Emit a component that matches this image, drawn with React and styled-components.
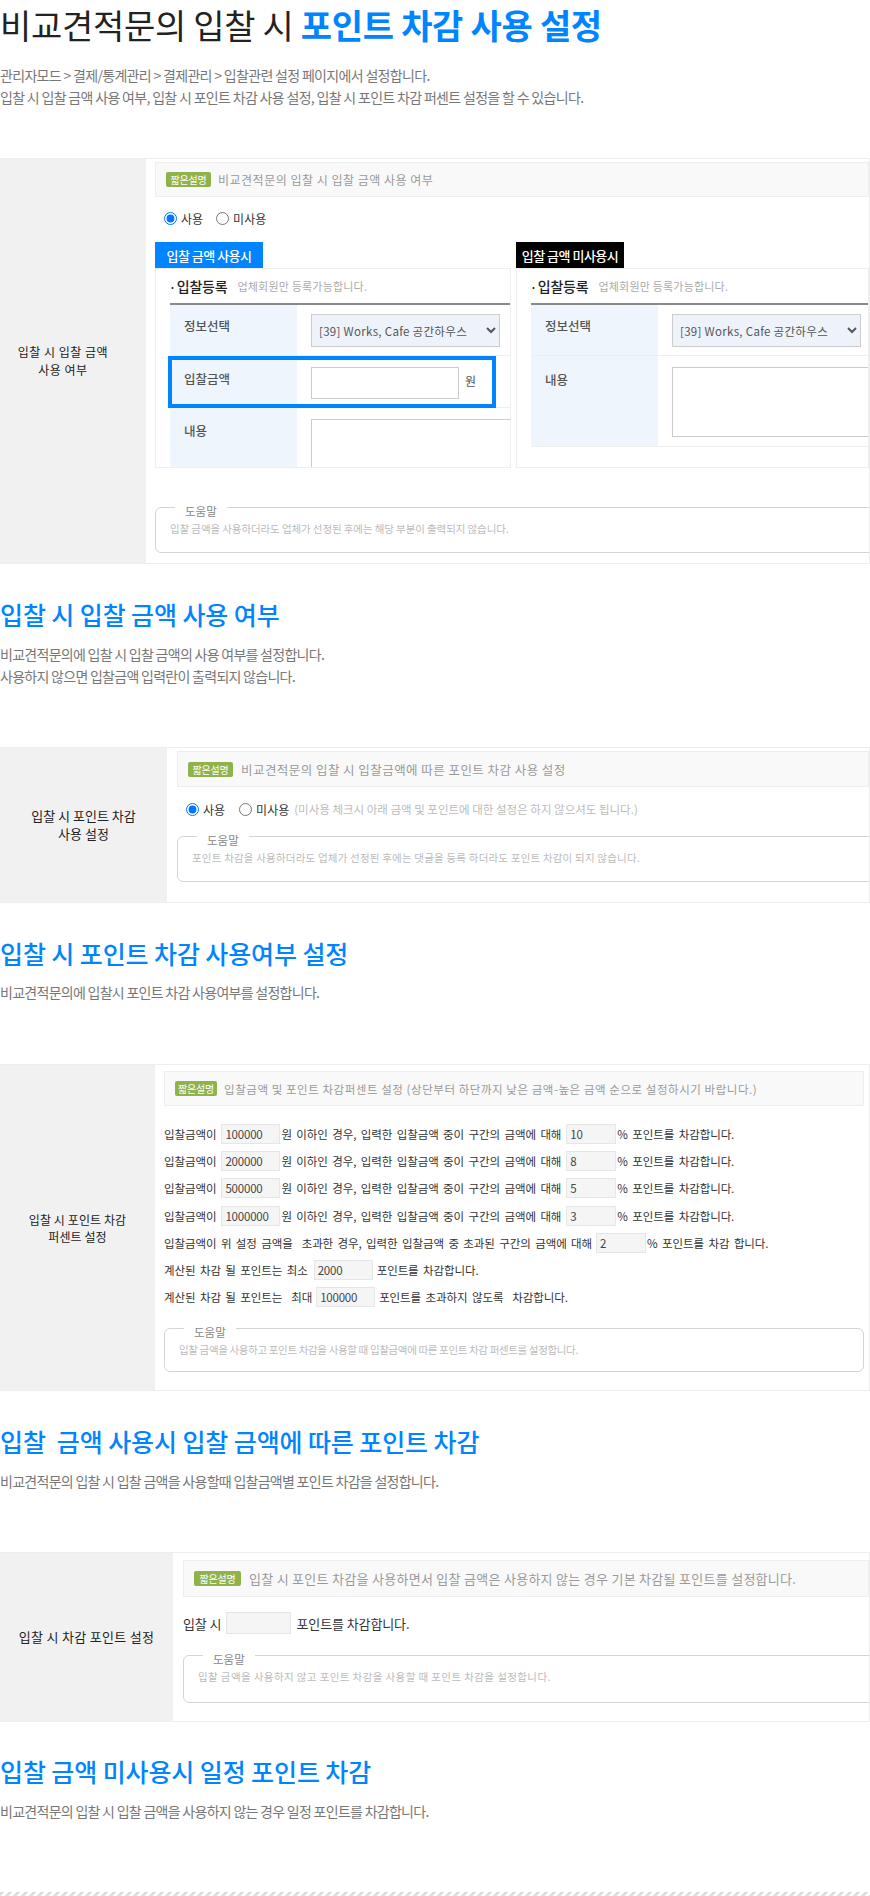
import React from "react";
import styled, { createGlobalStyle } from "styled-components";

const FONT = `"Noto Sans CJK KR", "Noto Sans", sans-serif`;
const BLUE = "#0084ff";

const Global = createGlobalStyle`
  html, body { margin: 0; padding: 0; background: #fff; }
  * { box-sizing: border-box; }
  body { font-family: ${FONT}; color: #222; }
`;

const Page = styled.div`
  width: 870px;
  height: 1896px;
  overflow: hidden;
  display: flex;
  flex-direction: column;
`;
const Title = styled.h1`
  margin: 0;
  font-size: 34px;
  line-height: 50px;
  font-weight: 400;
  letter-spacing: -0.3px;
  color: #222;
  white-space: nowrap;
`;
const Accent = styled.strong`
  font-weight: 700;
  color: ${BLUE};
`;
const Lead = styled.p`
  margin: ${(p) => p.$mt}px 0 0;
  font-size: 14px;
  line-height: 22px;
  letter-spacing: ${(p) => p.$ls}px;
  color: #777;
  white-space: nowrap;
`;
const SectionHeading = styled.h2`
  margin: ${(p) => p.$mt}px 0 0;
  font-size: 25px;
  line-height: 40px;
  font-weight: 500;
  letter-spacing: -0.1px;
  color: ${BLUE};
  white-space: pre;
`;
const Panel = styled.section`
  margin-top: ${(p) => p.$mt}px;
  width: 870px;
  height: ${(p) => p.$h}px;
  flex: none;
  display: flex;
  overflow: hidden;
  border: 1px solid #eee;
  border-left: 0;
`;
const PanelLabel = styled.div`
  flex: none;
  width: ${(p) => p.$w}px;
  padding-right: ${(p) => p.$pr || 0}px;
  background: #f1f1f1;
  display: flex;
  align-items: center;
  justify-content: center;
  text-align: center;
  font-size: ${(p) => p.$size}px;
  letter-spacing: ${(p) => p.$ls}px;
  line-height: ${(p) => p.$lh}px;
  color: #222;
`;
const PanelBody = styled.div`
  flex: 1;
  min-width: 0;
  padding: ${(p) => p.$pt}px ${(p) => p.$pr || 0}px 0 ${(p) => p.$pl}px;
`;
const HintBar = styled.div`
  height: ${(p) => p.$h}px;
  display: flex;
  align-items: center;
  padding-left: ${(p) => p.$pl}px;
  gap: ${(p) => p.$gap}px;
  background: #f9f9f9;
  border: 1px solid #eee;
  white-space: nowrap;
`;
const Badge = styled.span`
  flex: none;
  width: ${(p) => p.$w}px;
  height: 15px;
  display: flex;
  align-items: center;
  justify-content: center;
  background: #8fb24c;
  border-radius: 2px;
  color: #fff;
  font-size: 10px;
  letter-spacing: -0.2px;
`;
const HintText = styled.span`
  font-size: ${(p) => p.$size}px;
  letter-spacing: ${(p) => p.$ls}px;
  color: #999;
`;
const RadioRow = styled.div`
  margin-top: ${(p) => p.$mt}px;
  padding-left: ${(p) => p.$pl}px;
  height: 20px;
  display: flex;
  align-items: center;
  white-space: nowrap;
`;
const RadioInput = styled.input`
  margin: 0 4px 0 0;
  width: 13px;
  height: 13px;
  flex: none;
`;
const RadioLabel = styled.label`
  display: inline-flex;
  align-items: center;
  margin-right: ${(p) => p.$mr}px;
  font-size: 12px;
  color: #333;
`;
const RadioNote = styled.span`
  font-size: 11.5px;
  letter-spacing: 0;
  color: #bbb;
`;
const Columns = styled.div`
  margin-top: 14px;
  display: flex;
  gap: 5px;
`;
const Column = styled.div`
  width: ${(p) => p.$w}px;
  flex: none;
`;
const Tab = styled.div`
  width: 108px;
  height: 26px;
  display: flex;
  align-items: center;
  justify-content: center;
  background: ${(p) => (p.$dark ? "#000" : BLUE)};
  color: #fff;
  font-size: 13px;
  font-weight: 500;
  letter-spacing: -0.5px;
  white-space: nowrap;
`;
const FormBox = styled.div`
  height: 200px;
  overflow: hidden;
  border: 1px solid #eee;
  padding-left: 14px;
`;
const FormHead = styled.div`
  height: 34px;
  display: flex;
  align-items: center;
  white-space: nowrap;
`;
const FormTitle = styled.strong`
  font-size: 14px;
  font-weight: 500;
  letter-spacing: -0.2px;
  color: #222;
  &::before {
    content: "·";
    margin-right: 1px;
    margin-left: -1px;
    font-size: 12px;
  }
`;
const FormSub = styled.span`
  margin-left: 10px;
  font-size: 11px;
  letter-spacing: 0.2px;
  color: #aaa;
`;
const FormTable = styled.div`
  position: relative;
  border-top: 2px solid #8a8a8a;
`;
const FormRow = styled.div`
  display: grid;
  grid-template-columns: 127px 1fr;
  height: ${(p) => p.$h}px;
  border-bottom: 1px solid #eee;
`;
const FormTh = styled.div`
  background: #eff5fd;
  padding: ${(p) => p.$pt}px 0 0 14px;
  font-size: 12.5px;
  line-height: 16px;
  letter-spacing: 0;
  font-weight: 500;
  color: #555;
`;
const FormTd = styled.div`
  padding: ${(p) => p.$pt}px 0 0 14px;
  display: flex;
  align-items: flex-start;
  font-size: 12px;
  color: #555;
`;
const SelectBox = styled.select`
  width: 189px;
  height: 33px;
  padding-left: 3px;
  background: #eef3fb;
  border: 1px solid #ccc;
  border-radius: 0;
  font-family: ${FONT};
  font-size: 11.5px;
  letter-spacing: 0.3px;
  color: #555;
`;
const AmountInput = styled.input`
  width: 148px;
  height: 32px;
  border: 1px solid #ccc;
  background: #fff;
`;
const Unit = styled.span`
  margin-left: 6px;
  line-height: 28px;
`;
const TextBox = styled.div`
  width: ${(p) => p.$w}px;
  height: ${(p) => p.$h}px;
  flex: none;
  background: #fff;
  border: 1px solid #ccc;
`;
const Highlight = styled.div`
  position: absolute;
  top: 51px;
  left: -2px;
  width: 328px;
  height: 52px;
  border: 4px solid ${BLUE};
`;
const HelpBox = styled.fieldset`
  margin: ${(p) => p.$mt}px 0 0;
  padding: 0 14px;
  width: ${(p) => p.$w}px;
  height: ${(p) => p.$h}px;
  border: 1px solid #d4d4d4;
  border-radius: 6px;
`;
const HelpLegend = styled.legend`
  margin-left: 5px;
  padding: 8px 10px 0;
  font-size: 11.5px;
  line-height: 14px;
  color: #888;
`;
const HelpText = styled.p`
  margin: 4px 0 0;
  font-size: 10.5px;
  line-height: 14px;
  letter-spacing: ${(p) => p.$ls}px;
  color: #bbb;
  white-space: nowrap;
`;
const RuleList = styled.div`
  margin-top: ${(p) => p.$mt}px;
`;
const Rule = styled.div`
  height: ${(p) => p.$h}px;
  display: flex;
  align-items: center;
  font-size: ${(p) => p.$size || 11.5}px;
  letter-spacing: -0.1px;
  word-spacing: ${(p) => p.$ws}px;
  color: #333;
  white-space: pre;
`;
const FieldInput = styled.input`
  width: ${(p) => p.$w}px;
  height: ${(p) => p.$h || 20}px;
  margin: 0 ${(p) => p.$mr}px 0 ${(p) => p.$ml}px;
  padding: 0 3px;
  flex: none;
  background: #f5f5f5;
  border: 1px solid #e6e6e6;
  font-family: ${FONT};
  font-size: 11.5px;
  letter-spacing: -0.2px;
  color: #444;
`;
const Stripe = styled.div`
  margin-top: 70px;
  height: 4px;
  flex: none;
  background: repeating-linear-gradient(135deg, #ddd 0 2.83px, #fff 2.83px 5.66px);
`;

const Help = ({ mt, w, h, ls, children }) => (
  <HelpBox $mt={mt} $w={w} $h={h}>
    <HelpLegend>도움말</HelpLegend>
    <HelpText $ls={ls}>{children}</HelpText>
  </HelpBox>
);

const Radio = ({ group, checked, mr, children }) => (
  <RadioLabel $mr={mr}>
    <RadioInput type="radio" defaultChecked={checked} name={group} />
    {children}
  </RadioLabel>
);

const OPTION = "[39] Works, Cafe 공간하우스";
const Select = () => (
  <SelectBox defaultValue={OPTION}>
    <option>{OPTION}</option>
  </SelectBox>
);

const tiers = [
  ["100000", "10"],
  ["200000", "8"],
  ["500000", "5"],
  ["1000000", "3"],
];

export default function App() {
  return (
    <Page>
      <Global />
      <Title>
        비교견적문의 입찰 시 <Accent>포인트 차감 사용 설정</Accent>
      </Title>
      <Lead $mt={14} $ls={-0.68}>
        관리자모드 &gt; 결제/통계관리 &gt; 결제관리 &gt; 입찰관련 설정 페이지에서 설정합니다.
        <br />
        입찰 시 입찰 금액 사용 여부, 입찰 시 포인트 차감 사용 설정, 입찰 시 포인트 차감 퍼센트 설정을 할 수 있습니다.
      </Lead>

      <Panel $mt={50} $h={406}>
        <PanelLabel $w={146} $pr={20} $size={12} $ls={0.5} $lh={18}>
          입찰 시 입찰 금액
          <br />
          사용 여부
        </PanelLabel>
        <PanelBody $pt={3} $pl={9}>
          <HintBar $h={35} $pl={10} $gap={7}>
            <Badge $w={45}>짧은설명</Badge>
            <HintText $size={12} $ls={0.5}>비교견적문의 입찰 시 입찰 금액 사용 여부</HintText>
          </HintBar>
          <RadioRow $mt={11} $pl={9}>
            <Radio group="a" checked mr={13}>사용</Radio>
            <Radio group="a" mr={0}>미사용</Radio>
          </RadioRow>
          <Columns>
            <Column $w={356}>
              <Tab>입찰 금액 사용시</Tab>
              <FormBox>
                <FormHead>
                  <FormTitle>입찰등록</FormTitle>
                  <FormSub>업체회원만 등록가능합니다.</FormSub>
                </FormHead>
                <FormTable>
                  <FormRow $h={51}>
                    <FormTh $pt={13}>정보선택</FormTh>
                    <FormTd $pt={9}><Select /></FormTd>
                  </FormRow>
                  <FormRow $h={52}>
                    <FormTh $pt={15}>입찰금액</FormTh>
                    <FormTd $pt={11}>
                      <AmountInput />
                      <Unit>원</Unit>
                    </FormTd>
                  </FormRow>
                  <FormRow $h={80}>
                    <FormTh $pt={15}>내용</FormTh>
                    <FormTd $pt={11}><TextBox $w={200} $h={70} /></FormTd>
                  </FormRow>
                  <Highlight />
                </FormTable>
              </FormBox>
            </Column>
            <Column $w={353}>
              <Tab $dark>입찰 금액 미사용시</Tab>
              <FormBox>
                <FormHead>
                  <FormTitle>입찰등록</FormTitle>
                  <FormSub>업체회원만 등록가능합니다.</FormSub>
                </FormHead>
                <FormTable>
                  <FormRow $h={51}>
                    <FormTh $pt={13}>정보선택</FormTh>
                    <FormTd $pt={9}><Select /></FormTd>
                  </FormRow>
                  <FormRow $h={91}>
                    <FormTh $pt={16}>내용</FormTh>
                    <FormTd $pt={11}><TextBox $w={200} $h={70} /></FormTd>
                  </FormRow>
                </FormTable>
              </FormBox>
            </Column>
          </Columns>
          <Help mt={28} w={760} h={57} ls={-0.1}>
            입찰 금액을 사용하더라도 업체가 선정된 후에는 해당 부분이 출력되지 않습니다.
          </Help>
        </PanelBody>
      </Panel>

      <SectionHeading $mt={30}>입찰 시 입찰 금액 사용 여부</SectionHeading>
      <Lead $mt={9} $ls={-0.72}>
        비교견적문의에 입찰 시 입찰 금액의 사용 여부를 설정합니다.
        <br />
        사용하지 않으면 입찰금액 입력란이 출력되지 않습니다.
      </Lead>

      <Panel $mt={60} $h={156}>
        <PanelLabel $w={167} $size={13} $ls={0} $lh={18}>
          입찰 시 포인트 차감
          <br />
          사용 설정
        </PanelLabel>
        <PanelBody $pt={3} $pl={10}>
          <HintBar $h={36} $pl={10} $gap={8}>
            <Badge $w={45}>짧은설명</Badge>
            <HintText $size={12.5} $ls={0.45}>비교견적문의 입찰 시 입찰금액에 따른 포인트 차감 사용 설정</HintText>
          </HintBar>
          <RadioRow $mt={12} $pl={9}>
            <Radio group="b" checked mr={14}>사용</Radio>
            <Radio group="b" mr={5}>미사용</Radio>
            <RadioNote>(미사용 체크시 아래 금액 및 포인트에 대한 설정은 하지 않으셔도 됩니다.)</RadioNote>
          </RadioRow>
          <Help mt={6} w={760} h={57} ls={0.2}>
            포인트 차감을 사용하더라도 업체가 선정된 후에는 댓글을 등록 하더라도 포인트 차감이 되지 않습니다.
          </Help>
        </PanelBody>
      </Panel>

      <SectionHeading $mt={30}>입찰 시 포인트 차감 사용여부 설정</SectionHeading>
      <Lead $mt={8} $ls={-0.72}>비교견적문의에 입찰시 포인트 차감 사용여부를 설정합니다.</Lead>

      <Panel $mt={61} $h={327}>
        <PanelLabel $w={155} $size={12} $ls={0.1} $lh={17}>
          입찰 시 포인트 차감
          <br />
          퍼센트 설정
        </PanelLabel>
        <PanelBody $pt={6} $pl={9} $pr={5}>
          <HintBar $h={35} $pl={10} $gap={7}>
            <Badge $w={42}>짧은설명</Badge>
            <HintText $size={11.5} $ls={0.55}>입찰금액 및 포인트 차감퍼센트 설정 (상단부터 하단까지 낮은 금액-높은 금액 순으로 설정하시기 바랍니다.)</HintText>
          </HintBar>
          <RuleList $mt={14}>
            {tiers.map(([amount, pct]) => (
              <Rule $h={27.3} $ws={2} key={amount}>
                입찰금액이
                <FieldInput $w={59} $ml={5} $mr={1} defaultValue={amount} />
                원 이하인 경우, 입력한 입찰금액 중이 구간의 금액에 대해
                <FieldInput $w={50} $ml={5} $mr={1} defaultValue={pct} />
                % 포인트를 차감합니다.
              </Rule>
            ))}
            <Rule $h={27.3} $ws={2}>
              입찰금액이 위 설정 금액을  초과한 경우, 입력한 입찰금액 중 초과된 구간의 금액에 대해
              <FieldInput $w={50} $ml={4} $mr={1} defaultValue="2" />
              % 포인트를 차감 합니다.
            </Rule>
            <Rule $h={27.3} $ws={2}>
              계산된 차감 될 포인트는 최소
              <FieldInput $w={59} $ml={6} $mr={4} defaultValue="2000" />
              포인트를 차감합니다.
            </Rule>
            <Rule $h={27.3} $ws={2}>
              계산된 차감 될 포인트는  최대
              <FieldInput $w={59} $ml={4} $mr={4} defaultValue="100000" />
              포인트를 초과하지 않도록  차감합니다.
            </Rule>
          </RuleList>
          <Help mt={6} w={700} h={55} ls={-0.35}>
            입찰 금액을 사용하고 포인트 차감을 사용할 때 입찰금액에 따른 포인트 차감 퍼센트를 설정합니다.
          </Help>
        </PanelBody>
      </Panel>

      <SectionHeading $mt={30}>{"입찰  금액 사용시 입찰 금액에 따른 포인트 차감"}</SectionHeading>
      <Lead $mt={9} $ls={-0.72}>비교견적문의 입찰 시 입찰 금액을 사용할때 입찰금액별 포인트 차감을 설정합니다.</Lead>

      <Panel $mt={60} $h={170}>
        <PanelLabel $w={173} $size={13} $ls={0.3} $lh={18}>
          입찰 시 차감 포인트 설정
        </PanelLabel>
        <PanelBody $pt={7} $pl={10}>
          <HintBar $h={37} $pl={10} $gap={8}>
            <Badge $w={47}>짧은설명</Badge>
            <HintText $size={13} $ls={0.28}>입찰 시 포인트 차감을 사용하면서 입찰 금액은 사용하지 않는 경우 기본 차감될 포인트를 설정합니다.</HintText>
          </HintBar>
          <RuleList $mt={14}>
            <Rule $h={24} $size={13} $ws={0}>
              입찰 시
              <FieldInput $w={65} $h={22} $ml={5} $mr={5} />
              포인트를 차감합니다.
            </Rule>
          </RuleList>
          <Help mt={9} w={760} h={59} ls={0.4}>
            입찰 금액을 사용하지 않고 포인트 차감을 사용할 때 포인트 차감을 설정합니다.
          </Help>
        </PanelBody>
      </Panel>

      <SectionHeading $mt={29}>입찰 금액 미사용시 일정 포인트 차감</SectionHeading>
      <Lead $mt={9} $ls={-0.72}>비교견적문의 입찰 시 입찰 금액을 사용하지 않는 경우 일정 포인트를 차감합니다.</Lead>
      <Stripe />
    </Page>
  );
}
